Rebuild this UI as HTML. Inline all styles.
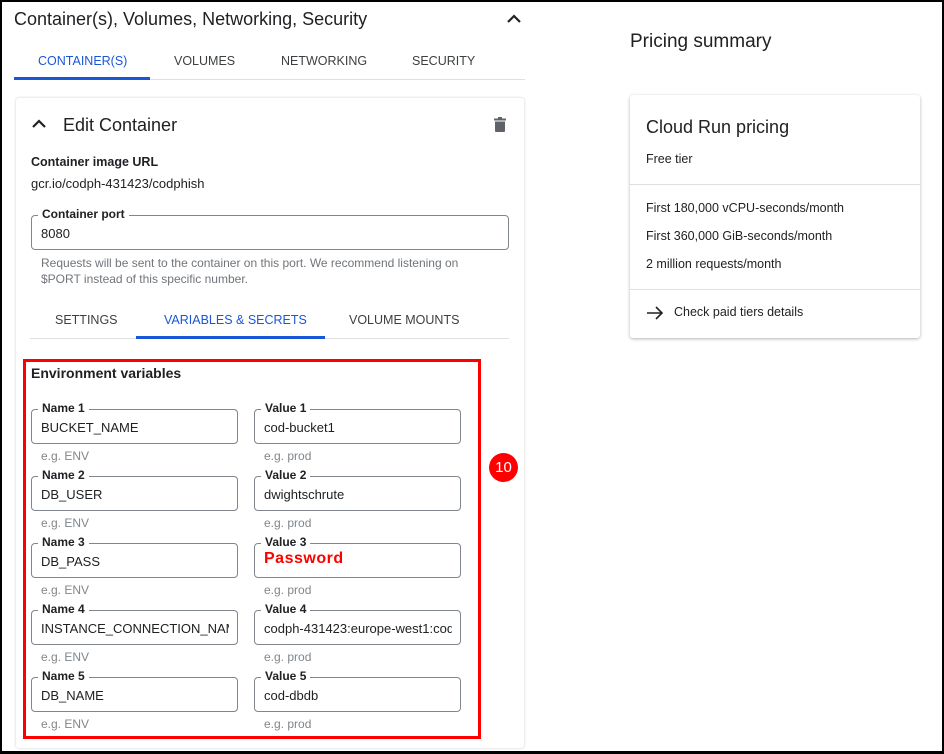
<!DOCTYPE html>
<html><head><meta charset="utf-8"><style>
*{box-sizing:border-box;margin:0;padding:0}
body{width:944px;height:754px;background:#000;position:relative;overflow:hidden;font-family:"Liberation Sans",Arial,sans-serif;color:#202124}
#pg{position:absolute;left:2px;top:2px;width:940px;height:749px;background:#fff}
.a{position:absolute;white-space:nowrap}
.fld{position:absolute;border:1px solid #80868b;border-radius:4px;height:35px}
.fld .l{position:absolute;left:6px;top:-9px;background:#fff;padding:0 4px;font-size:12px;font-weight:bold;color:#202124;line-height:14px}
.fld .v{position:absolute;left:9px;top:10px;font-size:13px;color:#202124;white-space:nowrap;overflow:hidden;right:8px}
.h{position:absolute;font-size:12px;color:#80868b}
</style></head><body><div id="pg">
<div class="a" style="left:12px;top:7px;font-size:18px;color:#202124">Container(s), Volumes, Networking, Security</div>
<svg class="a" style="left:504px;top:11px" width="16" height="12" viewBox="0 0 16 12"><path d="M2 9 L8 3 L14 9" fill="none" stroke="#202124" stroke-width="2.2"/></svg>
<div class="a" style="left:36px;top:52px;font-size:12.5px;color:#1a57d6">CONTAINER(S)</div>
<div class="a" style="left:172px;top:52px;font-size:12.5px;color:#3c4043">VOLUMES</div>
<div class="a" style="left:279px;top:52px;font-size:12.5px;color:#3c4043">NETWORKING</div>
<div class="a" style="left:410px;top:52px;font-size:12.5px;color:#3c4043">SECURITY</div>
<div class="a" style="left:12px;top:77px;width:511px;height:1px;background:#e0e0e0"></div>
<div class="a" style="left:12px;top:75px;width:136px;height:3px;background:#1a57d6"></div>
<div class="a" style="left:13px;top:95px;width:510px;height:652px;border:1px solid #eee;border-radius:4px;box-shadow:0 0 2px rgba(0,0,0,.08)"></div>
<svg class="a" style="left:29px;top:116px" width="16" height="12" viewBox="0 0 16 12"><path d="M2 9 L8 3 L14 9" fill="none" stroke="#202124" stroke-width="2.2"/></svg>
<div class="a" style="left:61px;top:113px;font-size:18px;color:#202124">Edit Container</div>
<svg class="a" style="left:491px;top:115px" width="14" height="16" viewBox="0 0 14 16"><rect x="1" y="1.5" width="12" height="2" fill="#5f6368"/><rect x="5" y="0" width="4" height="2" fill="#5f6368"/><path d="M2 4.5 H12 V14 Q12 15 11 15 H3 Q2 15 2 14Z" fill="#5f6368"/></svg>
<div class="a" style="left:29px;top:153px;font-size:12.5px;font-weight:bold;color:#202124">Container image URL</div>
<div class="a" style="left:29px;top:174px;font-size:13px;color:#202124">gcr.io/codph-431423/codphish</div>
<div class="fld" style="left:29px;top:213px;width:478px"><span class="l">Container port</span><span class="v">8080</span></div>
<div class="h" style="left:39px;top:253px;line-height:16px;color:#70757a">Requests will be sent to the container on this port. We recommend listening on<br>$PORT instead of this specific number.</div>
<div class="a" style="left:53px;top:311px;font-size:12.5px;color:#3c4043">SETTINGS</div>
<div class="a" style="left:162px;top:311px;font-size:12.5px;color:#1a57d6">VARIABLES &amp; SECRETS</div>
<div class="a" style="left:347px;top:311px;font-size:12.5px;color:#3c4043">VOLUME MOUNTS</div>
<div class="a" style="left:28px;top:336px;width:479px;height:1px;background:#e0e0e0"></div>
<div class="a" style="left:134px;top:334px;width:189px;height:3px;background:#1a57d6"></div>
<div class="a" style="left:21px;top:357px;width:458px;height:380px;border:3px solid #f00"></div>
<div class="a" style="left:29px;top:363px;font-size:14px;font-weight:bold;color:#202124">Environment variables</div>
<div class="fld" style="left:29px;top:407px;width:207px"><span class="l">Name 1</span><span class="v">BUCKET_NAME</span></div>
<div class="fld" style="left:252px;top:407px;width:207px"><span class="l">Value 1</span><span class="v">cod-bucket1</span></div>
<div class="h" style="left:39px;top:447px">e.g. ENV</div><div class="h" style="left:262px;top:447px">e.g. prod</div>
<div class="fld" style="left:29px;top:474px;width:207px"><span class="l">Name 2</span><span class="v">DB_USER</span></div>
<div class="fld" style="left:252px;top:474px;width:207px"><span class="l">Value 2</span><span class="v">dwightschrute</span></div>
<div class="h" style="left:39px;top:514px">e.g. ENV</div><div class="h" style="left:262px;top:514px">e.g. prod</div>
<div class="fld" style="left:29px;top:541px;width:207px"><span class="l">Name 3</span><span class="v">DB_PASS</span></div>
<div class="fld" style="left:252px;top:541px;width:207px"><span class="l">Value 3</span><span class="v" style="color:#f00;font-weight:bold;font-size:16px;top:6px;letter-spacing:.5px">Password</span></div>
<div class="h" style="left:39px;top:581px">e.g. ENV</div><div class="h" style="left:262px;top:581px">e.g. prod</div>
<div class="fld" style="left:29px;top:608px;width:207px"><span class="l">Name 4</span><span class="v">INSTANCE_CONNECTION_NAME</span></div>
<div class="fld" style="left:252px;top:608px;width:207px"><span class="l">Value 4</span><span class="v">codph-431423:europe-west1:cod</span></div>
<div class="h" style="left:39px;top:648px">e.g. ENV</div><div class="h" style="left:262px;top:648px">e.g. prod</div>
<div class="fld" style="left:29px;top:675px;width:207px"><span class="l">Name 5</span><span class="v">DB_NAME</span></div>
<div class="fld" style="left:252px;top:675px;width:207px"><span class="l">Value 5</span><span class="v">cod-dbdb</span></div>
<div class="h" style="left:39px;top:715px">e.g. ENV</div><div class="h" style="left:262px;top:715px">e.g. prod</div>
<div class="a" style="left:487px;top:451px;width:29px;height:29px;border-radius:50%;background:#f00;color:#fff;font-size:15px;text-align:center;line-height:29px">10</div>
<div class="a" style="left:628px;top:29px;font-size:19px;color:#202124">Pricing summary</div>
<div class="a" style="left:628px;top:93px;width:290px;height:243px;background:#fff;border-radius:3px;box-shadow:0 1px 3px rgba(0,0,0,.3)">
<div class="a" style="left:16px;top:22px;font-size:18px;color:#202124">Cloud Run pricing</div>
<div class="a" style="left:16px;top:57px;font-size:12.5px;color:#202124">Free tier</div>
<div class="a" style="left:0;top:89px;width:290px;height:1px;background:#e0e0e0"></div>
<div class="a" style="left:16px;top:106px;font-size:12.5px;color:#202124">First 180,000 vCPU-seconds/month</div>
<div class="a" style="left:16px;top:134px;font-size:12.5px;color:#202124">First 360,000 GiB-seconds/month</div>
<div class="a" style="left:16px;top:162px;font-size:12.5px;color:#202124">2 million requests/month</div>
<div class="a" style="left:0;top:194px;width:290px;height:1px;background:#e0e0e0"></div>
<svg class="a" style="left:16px;top:210px" width="18" height="16" viewBox="0 0 18 16"><path d="M1 8 H16 M10 2 L16 8 L10 14" fill="none" stroke="#202124" stroke-width="1.6"/></svg>
<div class="a" style="left:44px;top:210px;font-size:12.5px;color:#202124">Check paid tiers details</div>
</div>
</div></body></html>
